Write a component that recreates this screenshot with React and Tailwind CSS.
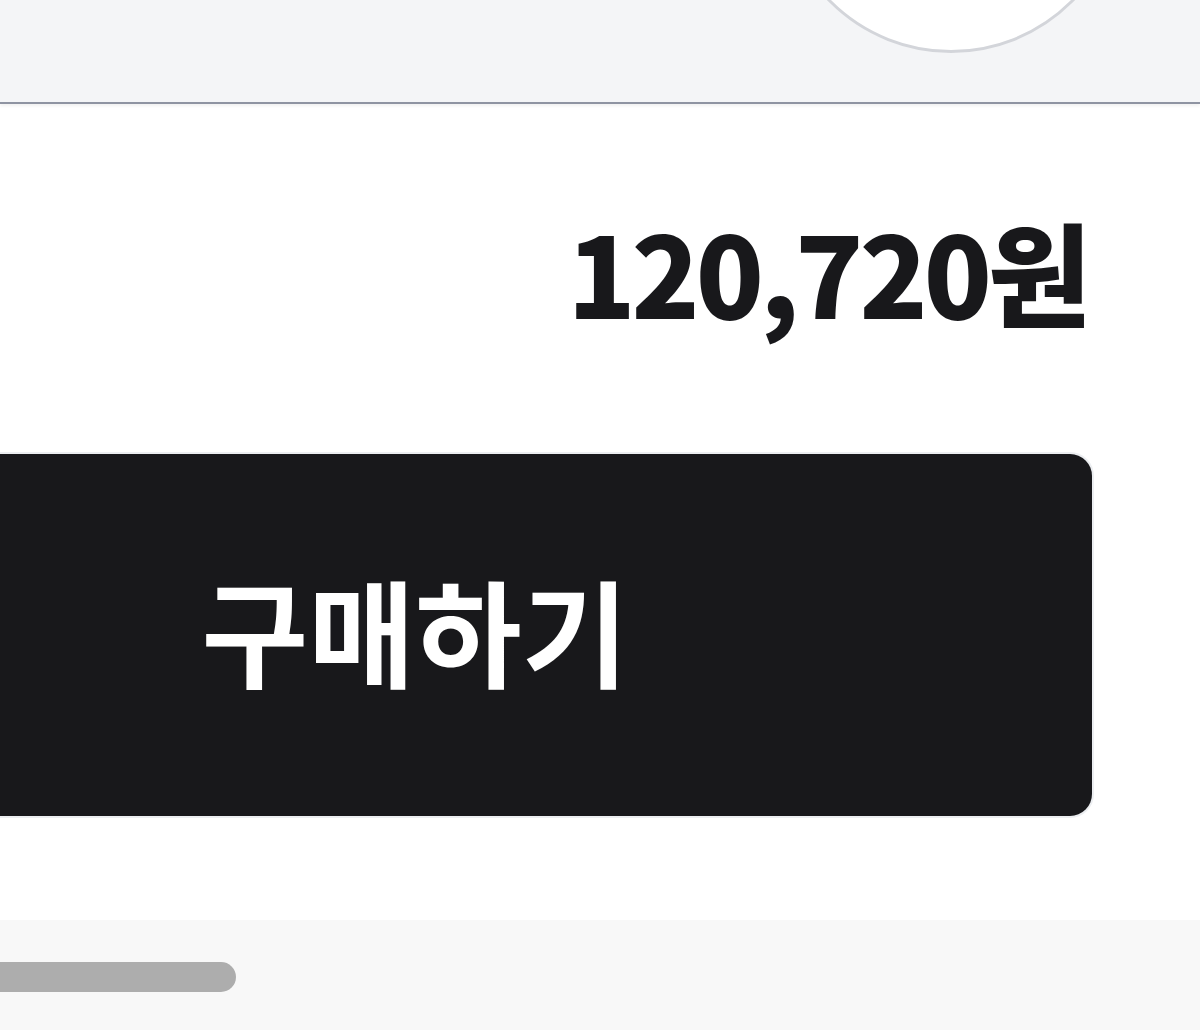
export default function App() {
  return (
    <div className="relative flex h-[1030px] w-[1200px] flex-col overflow-hidden bg-white" style={{ fontFamily: '"Noto Sans CJK KR", "Noto Sans", sans-serif' }}>
      <header className="relative h-[104px] shrink-0 border-b-2 border-[#8f94a2] bg-[#f4f5f7] shadow-[0_2px_3px_rgba(0,0,0,0.06)]">
        <div className="absolute left-[779px] top-[-291px] h-[344px] w-[344px] rounded-full border-[3px] border-[#d3d5da] bg-white" />
      </header>
      <main className="flex flex-1 flex-col">
        <div className="flex justify-end pr-[113px] pt-[110px]">
          <span className="text-[112px] font-black leading-none tracking-[-4px] text-[#18181b]">120,720원</span>
        </div>
        <div className="mt-[128px] flex justify-end pr-[108px]">
          <button className="ml-[-262px] flex h-[362px] w-[1354px] shrink-0 items-center justify-center rounded-[22px] bg-[#18181b] pb-[14px] shadow-[0_0_0_2px_#eceef1]">
            <span className="text-[116px] font-bold leading-none text-white">구매하기</span>
          </button>
        </div>
      </main>
      <footer className="flex h-[110px] shrink-0 items-center bg-[#f8f8f8] pt-[4px]">
        <div className="ml-[-20px] h-[30px] w-[256px] rounded-full bg-[#adadad]" />
      </footer>
    </div>
  );
}
